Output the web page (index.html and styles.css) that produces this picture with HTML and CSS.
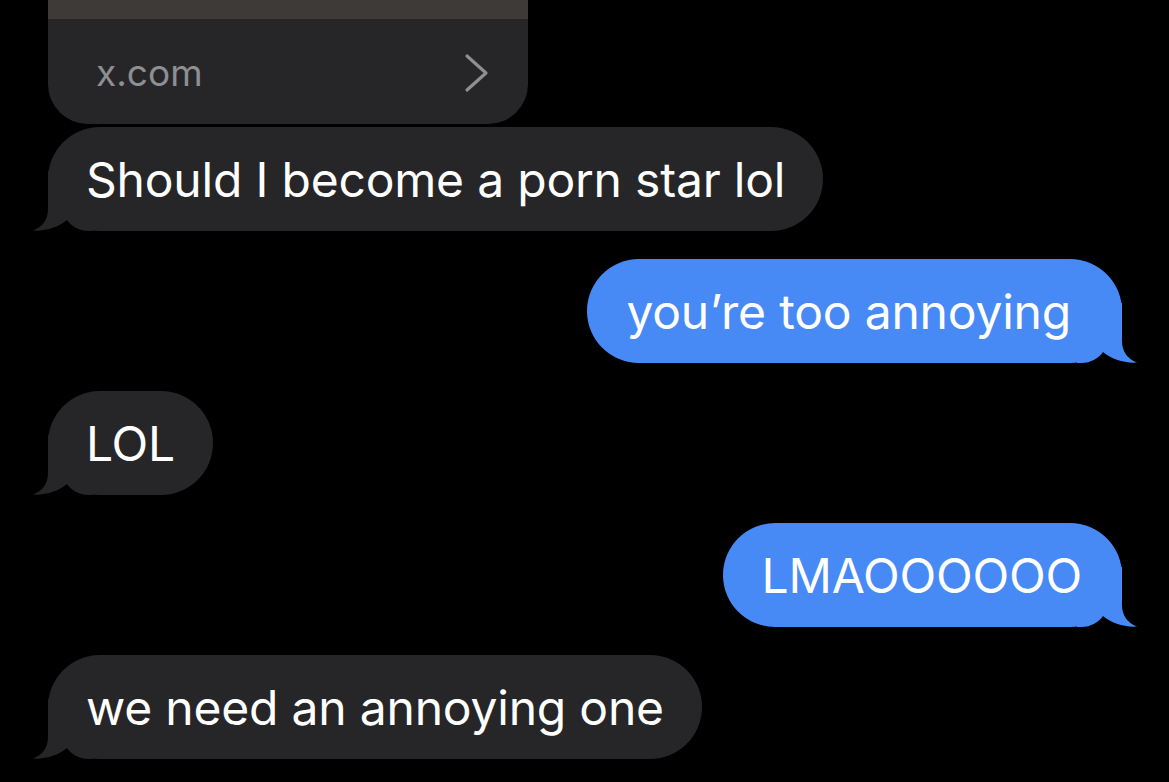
FILE: index.html
```html
<!DOCTYPE html>
<html>
<head>
<meta charset="utf-8">
<link rel="stylesheet" href="styles.css">
</head>
<body>
<div class="thread">
  <div class="row left">
    <div class="card">
      <div class="card-image"></div>
      <div class="card-footer">
        <span class="card-domain">x.com</span>
        <svg class="chevron" width="28" height="40" viewBox="0 0 28 40"><path d="M4 3 L23 20 L4 37" fill="none" stroke="#8e8e93" stroke-width="3.2" stroke-linecap="round" stroke-linejoin="round"/></svg>
      </div>
    </div>
  </div>
  <div class="row left first">
    <div class="bubble in">
      <svg class="tail tail-in" width="60" height="60" viewBox="0 0 60 60"><path d="M15 0 L15 38 C15 48 10 56 0 59.5 C12 60.5 26 56 34 49 C38 55 46 60 56 60 L60 60 L60 0 Z" fill="#262628"/></svg>
      <span class="text">Should I become a porn star lol</span>
    </div>
  </div>
  <div class="row right">
    <div class="bubble out wide">
      <svg class="tail tail-out" width="60" height="60" viewBox="0 0 60 60"><path d="M45 0 L45 38 C45 48 50 56 60 59.5 C48 60.5 34 56 26 49 C22 55 14 60 4 60 L0 60 L0 0 Z" fill="#478af6"/></svg>
      <span class="text">you’re too annoying</span>
    </div>
  </div>
  <div class="row left">
    <div class="bubble in">
      <svg class="tail tail-in" width="60" height="60" viewBox="0 0 60 60"><path d="M15 0 L15 38 C15 48 10 56 0 59.5 C12 60.5 26 56 34 49 C38 55 46 60 56 60 L60 60 L60 0 Z" fill="#262628"/></svg>
      <span class="text">LOL</span>
    </div>
  </div>
  <div class="row right">
    <div class="bubble out">
      <svg class="tail tail-out" width="60" height="60" viewBox="0 0 60 60"><path d="M45 0 L45 38 C45 48 50 56 60 59.5 C48 60.5 34 56 26 49 C22 55 14 60 4 60 L0 60 L0 0 Z" fill="#478af6"/></svg>
      <span class="text">LMAOOOOOO</span>
    </div>
  </div>
  <div class="row left">
    <div class="bubble in">
      <svg class="tail tail-in" width="60" height="60" viewBox="0 0 60 60"><path d="M15 0 L15 38 C15 48 10 56 0 59.5 C12 60.5 26 56 34 49 C38 55 46 60 56 60 L60 60 L60 0 Z" fill="#262628"/></svg>
      <span class="text">we need an annoying one</span>
    </div>
  </div>
</div>
</body>
</html>
```

FILE: styles.css
```css
html, body {
  margin: 0;
  padding: 0;
  background: #000;
  height: 100%;
  overflow: hidden;
}

.thread {
  display: flex;
  flex-direction: column;
  gap: 28px;
  padding: 0 47px 0 48px;
  font-family: Inter, "Liberation Sans", sans-serif;
}

.row {
  display: flex;
}

.row.left { justify-content: flex-start; }
.row.right { justify-content: flex-end; }
.row.first { margin-top: -25px; }

.card {
  width: 480px;
  height: 124px;
  border-radius: 0 0 40px 40px;
  overflow: hidden;
  background: #262628;
  display: flex;
  flex-direction: column;
}

.card-image {
  height: 19px;
  background: #3d3a37;
}

.card-footer {
  flex: 1;
  display: flex;
  align-items: center;
  justify-content: space-between;
  padding: 0 37px 0 48px;
}

.card-domain {
  color: #8e8e93;
  font-size: 37px;
  margin-top: 2px;
}

.chevron {
  margin-top: 2px;
}

.bubble {
  position: relative;
  height: 104px;
  display: flex;
  align-items: center;
  padding: 0 38px 0 38px;
  border-radius: 52px;
  color: #fff;
  font-size: 48px;
  letter-spacing: -0.2px;
  white-space: nowrap;
}

.bubble .text {
  position: relative;
  z-index: 1;
}

.bubble.in { background: #262628; }
.bubble.out { background: #478af6; padding: 0 40px 0 39px; }
.bubble.out.wide { padding-right: 51px; }

.tail {
  position: absolute;
  bottom: 0;
}

.tail-in { left: -15px; }
.tail-out { right: -15px; }
```
